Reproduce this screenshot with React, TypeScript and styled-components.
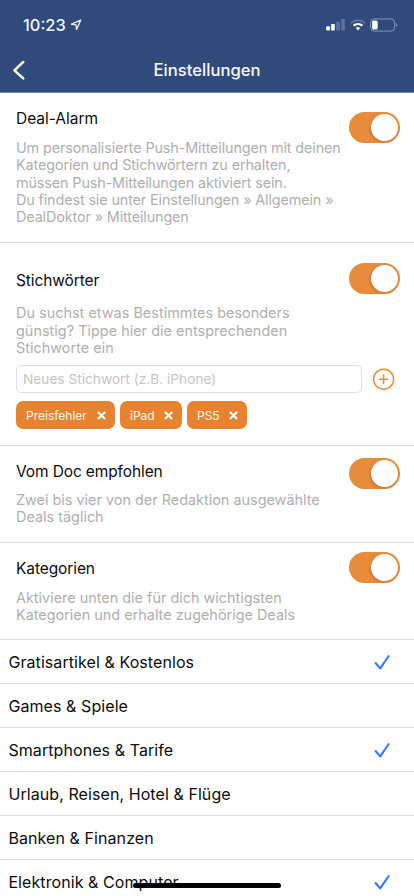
import React from 'react';
import styled, { createGlobalStyle } from 'styled-components';

const GlobalStyle = createGlobalStyle`
  * { box-sizing: border-box; }
  body { margin: 0; background: #fff; }
`;

const Screen = styled.div`
  position: relative;
  width: 414px;
  height: 896px;
  overflow: hidden;
  background: #fff;
  color: #0c0c0c;
  font-family: Inter, 'Liberation Sans', sans-serif;
`;

const Header = styled.header`
  height: 93px;
  background: #304a7b;
  border-bottom: 1px solid #7186ae;
  color: #fff;
`;

const StatusBar = styled.div`
  height: 50px;
  padding: 0 16px 0 23px;
  display: flex;
  align-items: center;
  justify-content: space-between;
`;

const StatusGroup = styled.div`
  display: flex;
  align-items: center;
`;

const SystemIcons = styled(StatusGroup)`
  gap: 4px;
`;

const Clock = styled.span`
  font-size: 16.4px;
  font-weight: 500;
  line-height: 20px;
  color: #f6f8fc;
  margin-right: 4px;
`;

const NavBar = styled.div`
  height: 42px;
  display: grid;
  grid-template-columns: 60px 1fr 60px;
  align-items: center;
`;

const BackButton = styled.button`
  border: 0;
  padding: 0 0 2px 12px;
  background: none;
  display: flex;
  color: #fff;
`;

const NavTitle = styled.h1`
  margin: 0;
  text-align: center;
  font-size: 16.6px;
  font-weight: 500;
  line-height: 20px;
  letter-spacing: 0.02px;
  color: #fafbfd;
  padding-bottom: 3px;
`;

const Section = styled.section<{ $height: number; $top: number }>`
  height: ${(p) => p.$height}px;
  padding: ${(p) => p.$top}px 14px 0 16px;
  border-bottom: 1px solid #e0e0e1;
`;

const SectionHead = styled.div<{ $shift: number }>`
  display: grid;
  grid-template-columns: 1fr 51px;
  align-items: start;
  > button { margin-top: ${(p) => p.$shift}px; }
`;

const SectionTitle = styled.h2<{ $spacing: number; $gap: number }>`
  margin: 0 0 ${(p) => p.$gap}px;
  font-size: 15.5px;
  font-weight: 400;
  line-height: 20px;
  letter-spacing: ${(p) => p.$spacing}px;
`;

const Description = styled.p<{ $spacing: number; $leading: number }>`
  margin: 0;
  font-size: 14.4px;
  line-height: ${(p) => p.$leading}px;
  letter-spacing: ${(p) => p.$spacing}px;
  white-space: pre;
  color: #afafaf;
`;

const Switch = styled.button`
  width: 51px;
  height: 31px;
  border: 0;
  border-radius: 16px;
  padding: 2px;
  background: #e88c3c;
  display: flex;
  justify-content: flex-end;
`;

const Knob = styled.span`
  width: 27px;
  height: 27px;
  border-radius: 50%;
  background: #fff;
  box-shadow: -1px 1px 3px rgba(90, 40, 0, 0.25);
`;

const KeywordForm = styled.div`
  margin-top: 8.5px;
  display: flex;
  align-items: center;
  gap: 11px;
`;

const KeywordInput = styled.input`
  width: 346px;
  height: 28px;
  border: 1px solid #e0e0e0;
  border-radius: 5px;
  padding: 0 6px;
  outline: 0;
  background: #fff;
  font-family: inherit;
  font-size: 13.7px;
  &::placeholder { color: #c5c5c7; opacity: 1; }
`;

const AddButton = styled.button`
  border: 0;
  padding: 0;
  background: none;
  display: flex;
  color: #e88c3c;
`;

const Chips = styled.div`
  margin-top: 8px;
  display: flex;
  gap: 5px;
`;

const Chip = styled.span<{ $width: number }>`
  width: ${(p) => p.$width}px;
  height: 28px;
  padding: 0 9.5px 0 10px;
  border-radius: 7px;
  background: #e58330;
  color: #fff5ec;
  display: flex;
  align-items: center;
  justify-content: space-between;
  font-size: 12px;
`;

const CategoryRow = styled.div`
  height: 44px;
  padding: 1px 23px 0 8.4px;
  border-bottom: 1px solid #e0e0e1;
  display: flex;
  align-items: center;
  justify-content: space-between;
  font-size: 16px;
  letter-spacing: 0.08px;
`;

const HomeIndicator = styled.div`
  position: absolute;
  left: 133px;
  bottom: 8px;
  width: 148px;
  height: 5px;
  border-radius: 3px;
  background: #000;
`;

const LocationIcon = () => (
  <svg width="12" height="12" viewBox="0 0 12 12" fill="none" stroke="#e6ebf4" strokeWidth="1.4" strokeLinejoin="round">
    <path d="M10.7 1.2 L1.5 5.2 L6 5.9 L6.6 10.4 Z" />
  </svg>
);

const SignalIcon = () => (
  <svg width="20" height="12" viewBox="0 0 20 12">
    <rect x="0.2" y="7.2" width="3.7" height="4.3" rx="0.8" fill="#fff" />
    <rect x="5.1" y="5" width="3.7" height="6.5" rx="0.8" fill="#fff" />
    <rect x="10.2" y="2.7" width="3.7" height="8.8" rx="0.8" fill="#5b70a0" />
    <rect x="15.2" y="0" width="3.7" height="11.5" rx="0.8" fill="#5b70a0" />
  </svg>
);

const WifiIcon = () => (
  <svg width="16" height="12" viewBox="0 0 16 12" fill="none" strokeWidth="2">
    <path d="M1 4.3 C5 0.2 11 0.2 15 4.3" stroke="#5b70a0" />
    <path d="M3.5 6.8 C6 4.3 10 4.3 12.5 6.8" stroke="#fff" />
    <path d="M5.7 9 Q8 7 10.3 9 L8 11.5 Z" fill="#fff" />
  </svg>
);

const BatteryIcon = () => (
  <svg width="28" height="14" viewBox="0 0 28 14">
    <rect x="0.6" y="0.9" width="24" height="12.2" rx="3.6" fill="none" stroke="#8797b8" />
    <rect x="2.1" y="2.4" width="5.6" height="9.2" rx="1.6" fill="#fff" />
    <path d="M25.9 5 Q27.3 5.8 27.3 7 Q27.3 8.2 25.9 9 Z" fill="#8797b8" />
  </svg>
);

const BackIcon = () => (
  <svg width="14" height="20" viewBox="0 0 14 20" fill="none" stroke="currentColor" strokeWidth="2.5" strokeLinecap="round" strokeLinejoin="round">
    <path d="M11.2 2 L2.4 10.3 L11.2 18.4" />
  </svg>
);

const PlusIcon = () => (
  <svg width="22" height="22" viewBox="0 0 22 22" fill="none" stroke="currentColor" strokeWidth="1.5">
    <circle cx="10.6" cy="11.2" r="10" />
    <path d="M5.9 11.2 H15.3 M10.6 6.5 V15.9" />
  </svg>
);

const CloseIcon = () => (
  <svg width="9" height="9" viewBox="0 0 9 9" stroke="#fff" strokeWidth="2.1">
    <path d="M0.9 0.9 L8.1 8.1 M8.1 0.9 L0.9 8.1" />
  </svg>
);

const CheckIcon = () => (
  <svg width="17" height="17" viewBox="0 0 17 17" fill="none" stroke="#3278f6" strokeWidth="2.1" strokeLinecap="round" strokeLinejoin="round">
    <path d="M1.6 9 L6.2 14.4 L14.7 2" />
  </svg>
);

type SettingProps = {
  title: string;
  text: string;
  height: number;
  top: number;
  gap: number;
  shift: number;
  titleSpacing: number;
  textSpacing: number;
  leading?: number;
  children?: React.ReactNode;
};

const Setting = ({ title, text, height, top, gap, shift, titleSpacing, textSpacing, leading = 17.5, children }: SettingProps) => (
  <Section $height={height} $top={top}>
    <SectionHead $shift={shift}>
      <div>
        <SectionTitle $spacing={titleSpacing} $gap={gap}>{title}</SectionTitle>
        <Description $spacing={textSpacing} $leading={leading}>{text}</Description>
      </div>
      <Switch role="switch" aria-checked="true" aria-label={title}><Knob /></Switch>
    </SectionHead>
    {children}
  </Section>
);

const keywords = [
  { label: 'Preisfehler', width: 99 },
  { label: 'iPad', width: 62 },
  { label: 'PS5', width: 60 },
];

const categories = [
  { label: 'Gratisartikel & Kostenlos', checked: true },
  { label: 'Games & Spiele', checked: false },
  { label: 'Smartphones & Tarife', checked: true },
  { label: 'Urlaub, Reisen, Hotel & Flüge', checked: false },
  { label: 'Banken & Finanzen', checked: false },
  { label: 'Elektronik & Computer', checked: true },
];

export default function App() {
  return (
    <Screen>
      <GlobalStyle />
      <Header>
        <StatusBar>
          <StatusGroup><Clock>10:23</Clock><LocationIcon /></StatusGroup>
          <SystemIcons>
            <SignalIcon />
            <WifiIcon />
            <BatteryIcon />
          </SystemIcons>
        </StatusBar>
        <NavBar>
          <BackButton aria-label="Zurück"><BackIcon /></BackButton>
          <NavTitle>Einstellungen</NavTitle>
        </NavBar>
      </Header>
      <Setting
        title="Deal-Alarm"
        text={'Um personalisierte Push-Mitteilungen mit deinen\nKategorien und Stichwörtern zu erhalten,\nmüssen Push-Mitteilungen aktiviert sein.\nDu findest sie unter Einstellungen » Allgemein »\nDealDoktor » Mitteilungen'}
        height={150} top={16} gap={10} shift={3} titleSpacing={-0.02} textSpacing={-0.13} leading={17.3}
      />
      <Setting
        title="Stichwörter"
        text={'Du suchst etwas Bestimmtes besonders\ngünstig? Tippe hier die entsprechenden\nStichworte ein'}
        height={203} top={28} gap={13} shift={-8} titleSpacing={-0.1} textSpacing={0.03}
      >
        <KeywordForm>
          <KeywordInput placeholder="Neues Stichwort (z.B. iPhone)" />
          <AddButton aria-label="Hinzufügen"><PlusIcon /></AddButton>
        </KeywordForm>
        <Chips>
          {keywords.map((k) => (
            <Chip key={k.label} $width={k.width}>{k.label}<CloseIcon /></Chip>
          ))}
        </Chips>
      </Setting>
      <Setting
        title="Vom Doc empfohlen"
        text={'Zwei bis vier von der Redaktion ausgewählte\nDeals täglich'}
        height={97} top={16} gap={9} shift={-4} titleSpacing={-0.12} textSpacing={0.01} leading={17.3}
      />
      <Setting
        title="Kategorien"
        text={'Aktiviere unten die für dich wichtigsten\nKategorien und erhalte zugehörige Deals'}
        height={97} top={16} gap={10} shift={-7} titleSpacing={-0.1} textSpacing={0.01} leading={17}
      />
      {categories.map((c) => (
        <CategoryRow key={c.label}>{c.label}{c.checked && <CheckIcon />}</CategoryRow>
      ))}
      <HomeIndicator />
    </Screen>
  );
}
